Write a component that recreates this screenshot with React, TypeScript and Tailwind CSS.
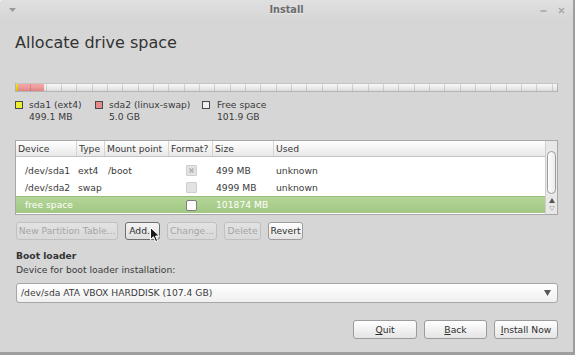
import React from "react";

const F = { fontFamily: '"DejaVu Sans", "Liberation Sans", sans-serif' };

function Btn({
  w,
  children,
  disabled,
  hover,
  h = "h-[18px]",
}: {
  w: string;
  children: React.ReactNode;
  disabled?: boolean;
  hover?: boolean;
  h?: string;
}) {
  const base = `${w} ${h} flex items-center justify-center rounded-[3px] border text-[9.2px] leading-none`;
  if (disabled)
    return (
      <div className={`${base} border-[#c0c0c0] bg-gradient-to-b from-[#e2e2e2] to-[#d9d9d9] text-[#a6a6a6]`}>
        {children}
      </div>
    );
  if (hover)
    return (
      <div className={`${base} border-[#6f6f6f] bg-gradient-to-b from-[#f4f4f4] to-[#dedede] text-[#2e2e2e]`}>
        {children}
      </div>
    );
  return (
    <div className={`${base} border-[#9c9c9c] bg-gradient-to-b from-[#ffffff] to-[#e4e4e4] text-[#2e2e2e]`}>
      {children}
    </div>
  );
}

function Check({ kind }: { kind: "x" | "dis" | "on" }) {
  if (kind === "on")
    return <div className="w-[11px] h-[11px] rounded-[2px] border border-[#7d7d7d] bg-white" />;
  return (
    <div className="w-[11px] h-[11px] rounded-[1px] border border-[#cfcfcf] bg-[#e2e2e2] flex items-center justify-center">
      {kind === "x" && (
        <svg width="7" height="7" viewBox="0 0 7 7">
          <path d="M1.5 1.5 L5.5 5.5 M5.5 1.5 L1.5 5.5" stroke="#a8a8a8" strokeWidth="1.2" />
        </svg>
      )}
    </div>
  );
}

const cols = "grid grid-cols-[61px_28px_64px_44px_61px_1fr]";

export default function App() {
  return (
    <div
      style={F}
      className="relative w-[575px] h-[355px] overflow-hidden bg-[#d6d6d6] border-r-2 border-b-[3px] border-[#9e9e9e] text-[#3a3a3a] rounded-tl-[3px]"
    >
      {/* title bar */}
      <div className="h-[20px] flex items-center bg-gradient-to-b from-[#e0e0e0] to-[#d6d6d6]">
        <div className="w-[60px] pl-[9px] flex items-center">
          <svg width="7" height="4" viewBox="0 0 7 4">
            <path d="M0 0 L7 0 L3.5 4 Z" fill="#9a9a9a" />
          </svg>
        </div>
        <div className="flex-1 text-center text-[9.7px] font-bold text-[#6b6b6b] [text-shadow:0_1px_0_#ececec]">
          Install
        </div>
        <div className="w-[60px] pr-[8px] flex items-center justify-end gap-[11px]">
          <svg width="7" height="7" viewBox="0 0 7 7">
            <path d="M0.5 4 L6.5 4" stroke="#a0a0a0" strokeWidth="1.4" />
          </svg>
          <svg width="7" height="7" viewBox="0 0 7 7">
            <path d="M1 1 L6 6 M6 1 L1 6" stroke="#a4a4a4" strokeWidth="1.3" />
          </svg>
        </div>
      </div>

      <div className="px-[15px]">
        <div className="mt-[13px] h-[19px] text-[16px] leading-[19px] text-[#333333]">Allocate drive space</div>

        {/* partition bar */}
        <div className="mt-[31px] relative h-[9px] flex border border-[#b4b4b4] border-t-[#c4c4c4]">
          <div className="w-[2px] bg-gradient-to-b from-[#e8e820] to-[#c8c800]" />
          <div className="w-[26px] bg-gradient-to-b from-[#f3a6a6] via-[#ee9a9a] to-[#dd8585]" />
          <div className="flex-1 bg-gradient-to-b from-[#f8f8f8] via-[#ececec] to-[#dcdcdc]" />
          <div className="absolute inset-0 bg-[repeating-linear-gradient(to_right,transparent_0px,transparent_14.33px,rgba(0,0,0,0.13)_14.33px,rgba(0,0,0,0.13)_15.33px)]" />
        </div>

        {/* legend */}
        <div className="mt-[7px] flex text-[9.2px] leading-[12px]">
          <div className="w-[80px] flex gap-[6px]">
            <div className="mt-[2px] w-[8px] h-[8px] border border-[#4a4a4a] bg-[#ecec30]" />
            <div>
              <div>sda1 (ext4)</div>
              <div>499.1 MB</div>
            </div>
          </div>
          <div className="w-[107px] flex gap-[6px]">
            <div className="mt-[2px] w-[8px] h-[8px] border border-[#4a4a4a] bg-[#e88a8a]" />
            <div>
              <div>sda2 (linux-swap)</div>
              <div>5.0 GB</div>
            </div>
          </div>
          <div className="flex gap-[7px]">
            <div className="mt-[2px] w-[8px] h-[8px] border border-[#4a4a4a] bg-[#efefef]" />
            <div>
              <div>Free space</div>
              <div>101.9 GB</div>
            </div>
          </div>
        </div>

        {/* table */}
        <div className="mt-[17px] h-[75px] border border-[#a8a8a8] flex bg-white text-[9.2px]">
          <div className="flex-1 flex flex-col">
            <div className={`${cols} h-[16px] bg-gradient-to-b from-[#ffffff] to-[#e8e8e8] border-b border-[#c4c4c4] items-stretch`}>
              {["Device", "Type", "Mount point", "Format?", "Size", "Used"].map((h, i) => (
                <div
                  key={h}
                  className={`flex items-center pl-[2px] ${i < 5 ? "border-r border-[#d4d4d4]" : ""}`}
                >
                  {h}
                </div>
              ))}
            </div>
            <div className="pt-[5px]">
              <div className={`${cols} h-[17px] items-center`}>
                <div className="pl-[9px]">/dev/sda1</div>
                <div className="pl-[1px]">ext4</div>
                <div className="pl-[3px]">/boot</div>
                <div className="flex justify-center">
                  <Check kind="x" />
                </div>
                <div className="pl-[3px]">499 MB</div>
                <div className="pl-[2px]">unknown</div>
              </div>
              <div className={`${cols} h-[17px] items-center`}>
                <div className="pl-[9px]">/dev/sda2</div>
                <div className="pl-[1px]">swap</div>
                <div />
                <div className="flex justify-center">
                  <Check kind="dis" />
                </div>
                <div className="pl-[3px]">4999 MB</div>
                <div className="pl-[2px]">unknown</div>
              </div>
              <div className={`${cols} h-[17px] items-center bg-gradient-to-b from-[#b3d597] to-[#a2c783] border-t border-[#98bd79] text-white`}>
                <div className="pl-[9px] col-span-3">free space</div>
                <div className="flex justify-center">
                  <Check kind="on" />
                </div>
                <div className="pl-[3px]">101874 MB</div>
                <div />
              </div>
            </div>
          </div>
          <div className="w-[12px] bg-[#e8e8e8] border-l border-[#d0d0d0] flex flex-col items-center pt-[10px]">
            <div className="w-[9px] h-[43px] rounded-[5px] border border-[#9c9c9c] bg-gradient-to-r from-[#fdfdfd] to-[#ececec]" />
            <svg className="mt-[4px]" width="6" height="5" viewBox="0 0 6 5">
              <path d="M3 0 L6 5 L0 5 Z" fill="#555555" />
            </svg>
            <svg className="mt-[3px]" width="6" height="5" viewBox="0 0 6 5">
              <path d="M0.5 0.5 L5.5 0.5 L3 4.5 Z" fill="none" stroke="#b8b8b8" strokeWidth="0.8" />
            </svg>
          </div>
        </div>

        {/* partition buttons */}
        <div className="mt-[7px] flex gap-[7px] pl-[1px]">
          <Btn w="w-[102px]" disabled>
            New Partition Table...
          </Btn>
          <Btn w="w-[35px]" hover>
            Add...
          </Btn>
          <Btn w="w-[50px]" disabled>
            Change...
          </Btn>
          <Btn w="w-[37px]" disabled>
            Delete
          </Btn>
          <Btn w="w-[35px]">Revert</Btn>
        </div>

        <div className="mt-[10px] h-[12px] leading-[12px] text-[9.2px] font-bold text-[#333333] pl-[1px]">Boot loader</div>
        <div className="mt-[2px] h-[12px] leading-[12px] text-[9.2px] pl-[1px]">Device for boot loader installation:</div>

        <div className="mt-[7px] ml-[1px] h-[20px] rounded-[3px] border border-[#a6a6a6] bg-gradient-to-b from-[#ffffff] to-[#f0f0f0] flex items-center pl-[4px] pr-[6px] text-[9.2px]">
          <div className="flex-1">/dev/sda ATA VBOX HARDDISK (107.4 GB)</div>
          <svg width="7" height="6" viewBox="0 0 7 6">
            <path d="M0 0 L7 0 L3.5 6 Z" fill="#555555" />
          </svg>
        </div>

        <div className="mt-[17px] flex justify-end gap-[7px]">
          <Btn w="w-[64px]" h="h-[19px]">
            <span>
              <span className="underline">Q</span>uit
            </span>
          </Btn>
          <Btn w="w-[63px]" h="h-[19px]">
            <span>
              <span className="underline">B</span>ack
            </span>
          </Btn>
          <Btn w="w-[64px]" h="h-[19px]">
            <span>
              <span className="underline">I</span>nstall Now
            </span>
          </Btn>
        </div>
      </div>

      {/* mouse cursor */}
      <svg className="absolute left-[150px] top-[227px]" width="11" height="16" viewBox="0 0 11 16">
        <path
          d="M0.5 0.5 L0.5 12.5 L3.5 9.7 L5.6 14.6 L7.6 13.8 L5.6 9 L9.5 9 Z"
          fill="#1a1a1a"
          stroke="#ffffff"
          strokeWidth="1"
          strokeLinejoin="round"
        />
      </svg>
    </div>
  );
}
